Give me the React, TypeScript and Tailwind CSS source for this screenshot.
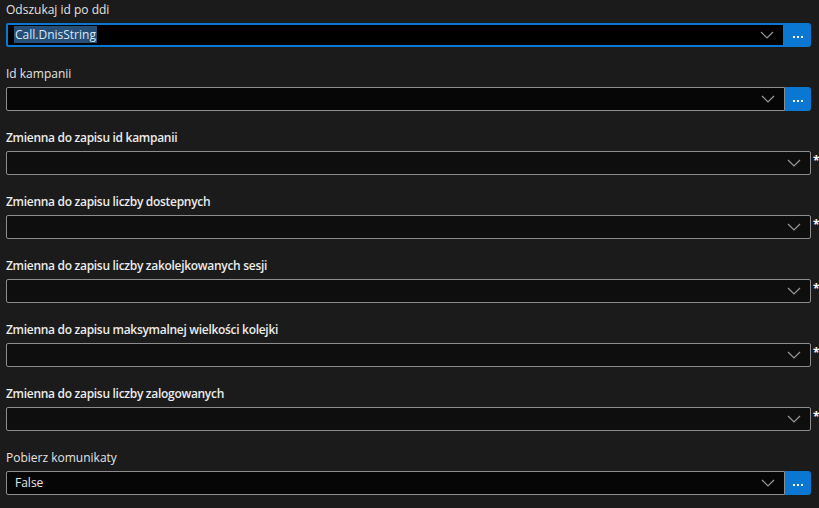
import React from "react";

type Field = {
  label: string;
  bold?: boolean;
  value?: string;
  selected?: boolean;
  focused?: boolean;
  button?: boolean;
};

const fields: Field[] = [
  { label: "Odszukaj id po ddi", value: "Call.DnisString", selected: true, focused: true, button: true },
  { label: "Id kampanii", button: true },
  { label: "Zmienna do zapisu id kampanii", bold: true },
  { label: "Zmienna do zapisu liczby dostepnych", bold: true },
  { label: "Zmienna do zapisu liczby zakolejkowanych sesji", bold: true },
  { label: "Zmienna do zapisu maksymalnej wielkości kolejki", bold: true },
  { label: "Zmienna do zapisu liczby zalogowanych", bold: true },
  { label: "Pobierz komunikaty", value: "False", button: true },
];

function Chevron() {
  return (
    <svg width="14" height="8" viewBox="0 0 14 8" className="shrink-0">
      <path d="M1 1l6 6 6-6" fill="none" stroke="#9a9a9a" strokeWidth="1.2" />
    </svg>
  );
}

export default function App() {
  return (
    <main className="w-[819px] h-[508px] bg-[#1b1b1b] pt-[1px] pl-[6px] font-['Open_Sans','Noto_Sans',sans-serif] text-[12px] overflow-hidden">
      {fields.map((f) => (
        <div key={f.label} className="h-16 flex flex-col">
          <div
            className={`h-[22px] leading-[18px] ${
              f.bold ? "font-semibold text-[#ececec] tracking-[-0.3px]" : "text-[#e3e3e3]"
            }`}
          >
            {f.label}
          </div>
          <div className="flex items-center">
            <div className="w-[805px] shrink-0 flex h-6">
              <div
                className={`flex-1 flex items-center rounded-[2px] pr-[9px] ${
                  f.focused
                    ? "border-2 border-[#0a78d2] bg-black pl-[6px]"
                    : f.button
                    ? "border border-[#8d8d8d] bg-[#060606] pl-[8px]"
                    : "border border-[#8d8d8d] bg-[#0e0e0e] pl-2"
                } ${f.button ? "rounded-r-none" : ""}`}
              >
                <div className="flex-1 leading-4">
                  {f.value && (
                    <span className={f.selected ? "bg-[#264f78] text-[#dbe8f5] px-[1px]" : "text-[#e6e6e6]"}>
                      {f.value}
                    </span>
                  )}
                </div>
                <Chevron />
              </div>
              {f.button && (
                <button className="w-[26px] h-6 bg-[#0a78d2] rounded-r-[3px] flex items-center justify-center gap-[2px] pt-[3px]">
                  <span className="w-[2px] h-[2px] bg-white" />
                  <span className="w-[2px] h-[2px] bg-white" />
                  <span className="w-[2px] h-[2px] bg-white" />
                </button>
              )}
            </div>
            {!f.button && (
              <span className="ml-[2px] shrink-0 text-white font-bold text-[12px] leading-none -mt-1">*</span>
            )}
          </div>
        </div>
      ))}
    </main>
  );
}
